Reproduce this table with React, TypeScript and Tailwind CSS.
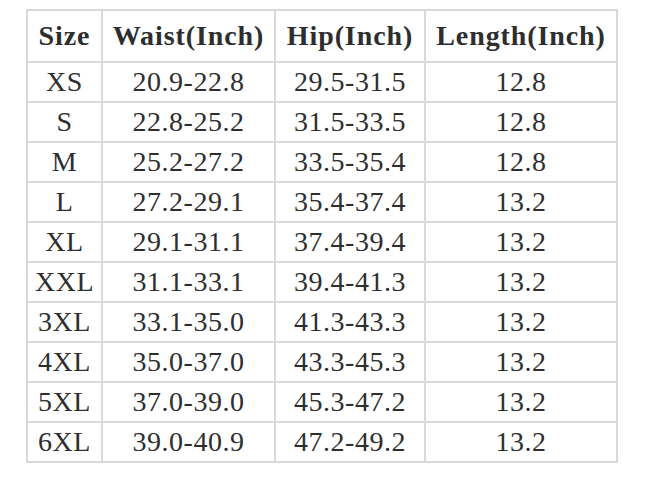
const headers = ['Size', 'Waist(Inch)', 'Hip(Inch)', 'Length(Inch)'];

const rows: string[][] = [
  ['XS', '20.9-22.8', '29.5-31.5', '12.8'],
  ['S', '22.8-25.2', '31.5-33.5', '12.8'],
  ['M', '25.2-27.2', '33.5-35.4', '12.8'],
  ['L', '27.2-29.1', '35.4-37.4', '13.2'],
  ['XL', '29.1-31.1', '37.4-39.4', '13.2'],
  ['XXL', '31.1-33.1', '39.4-41.3', '13.2'],
  ['3XL', '33.1-35.0', '41.3-43.3', '13.2'],
  ['4XL', '35.0-37.0', '43.3-45.3', '13.2'],
  ['5XL', '37.0-39.0', '45.3-47.2', '13.2'],
  ['6XL', '39.0-40.9', '47.2-49.2', '13.2'],
];

const colWidths = ['w-[75px]', 'w-[173px]', 'w-[150px]', 'w-[192px]'];

export default function App() {
  return (
    <div className="w-[648px] h-[501px] bg-white pl-[26px] pt-[9px] [font-family:'Liberation_Serif',serif] text-[#2e2e2e]">
      <table className="w-[592px] table-fixed border-collapse">
        <colgroup>
          {colWidths.map((w, i) => (
            <col key={i} className={w} />
          ))}
        </colgroup>
        <thead>
          <tr className="h-[52px]">
            {headers.map(h => (
              <th key={h} className="border-2 border-[#d9d9d9] p-0 text-center text-[28px] font-bold tracking-[0.9px] leading-none">
                {h}
              </th>
            ))}
          </tr>
        </thead>
        <tbody>
          {rows.map(r => (
            <tr key={r[0]} className="h-[40px]">
              {r.map((c, i) => (
                <td key={i} className="border-2 border-[#d9d9d9] p-0 text-center text-[28px] tracking-[0.5px] leading-none">
                  {c}
                </td>
              ))}
            </tr>
          ))}
        </tbody>
      </table>
    </div>
  );
}
